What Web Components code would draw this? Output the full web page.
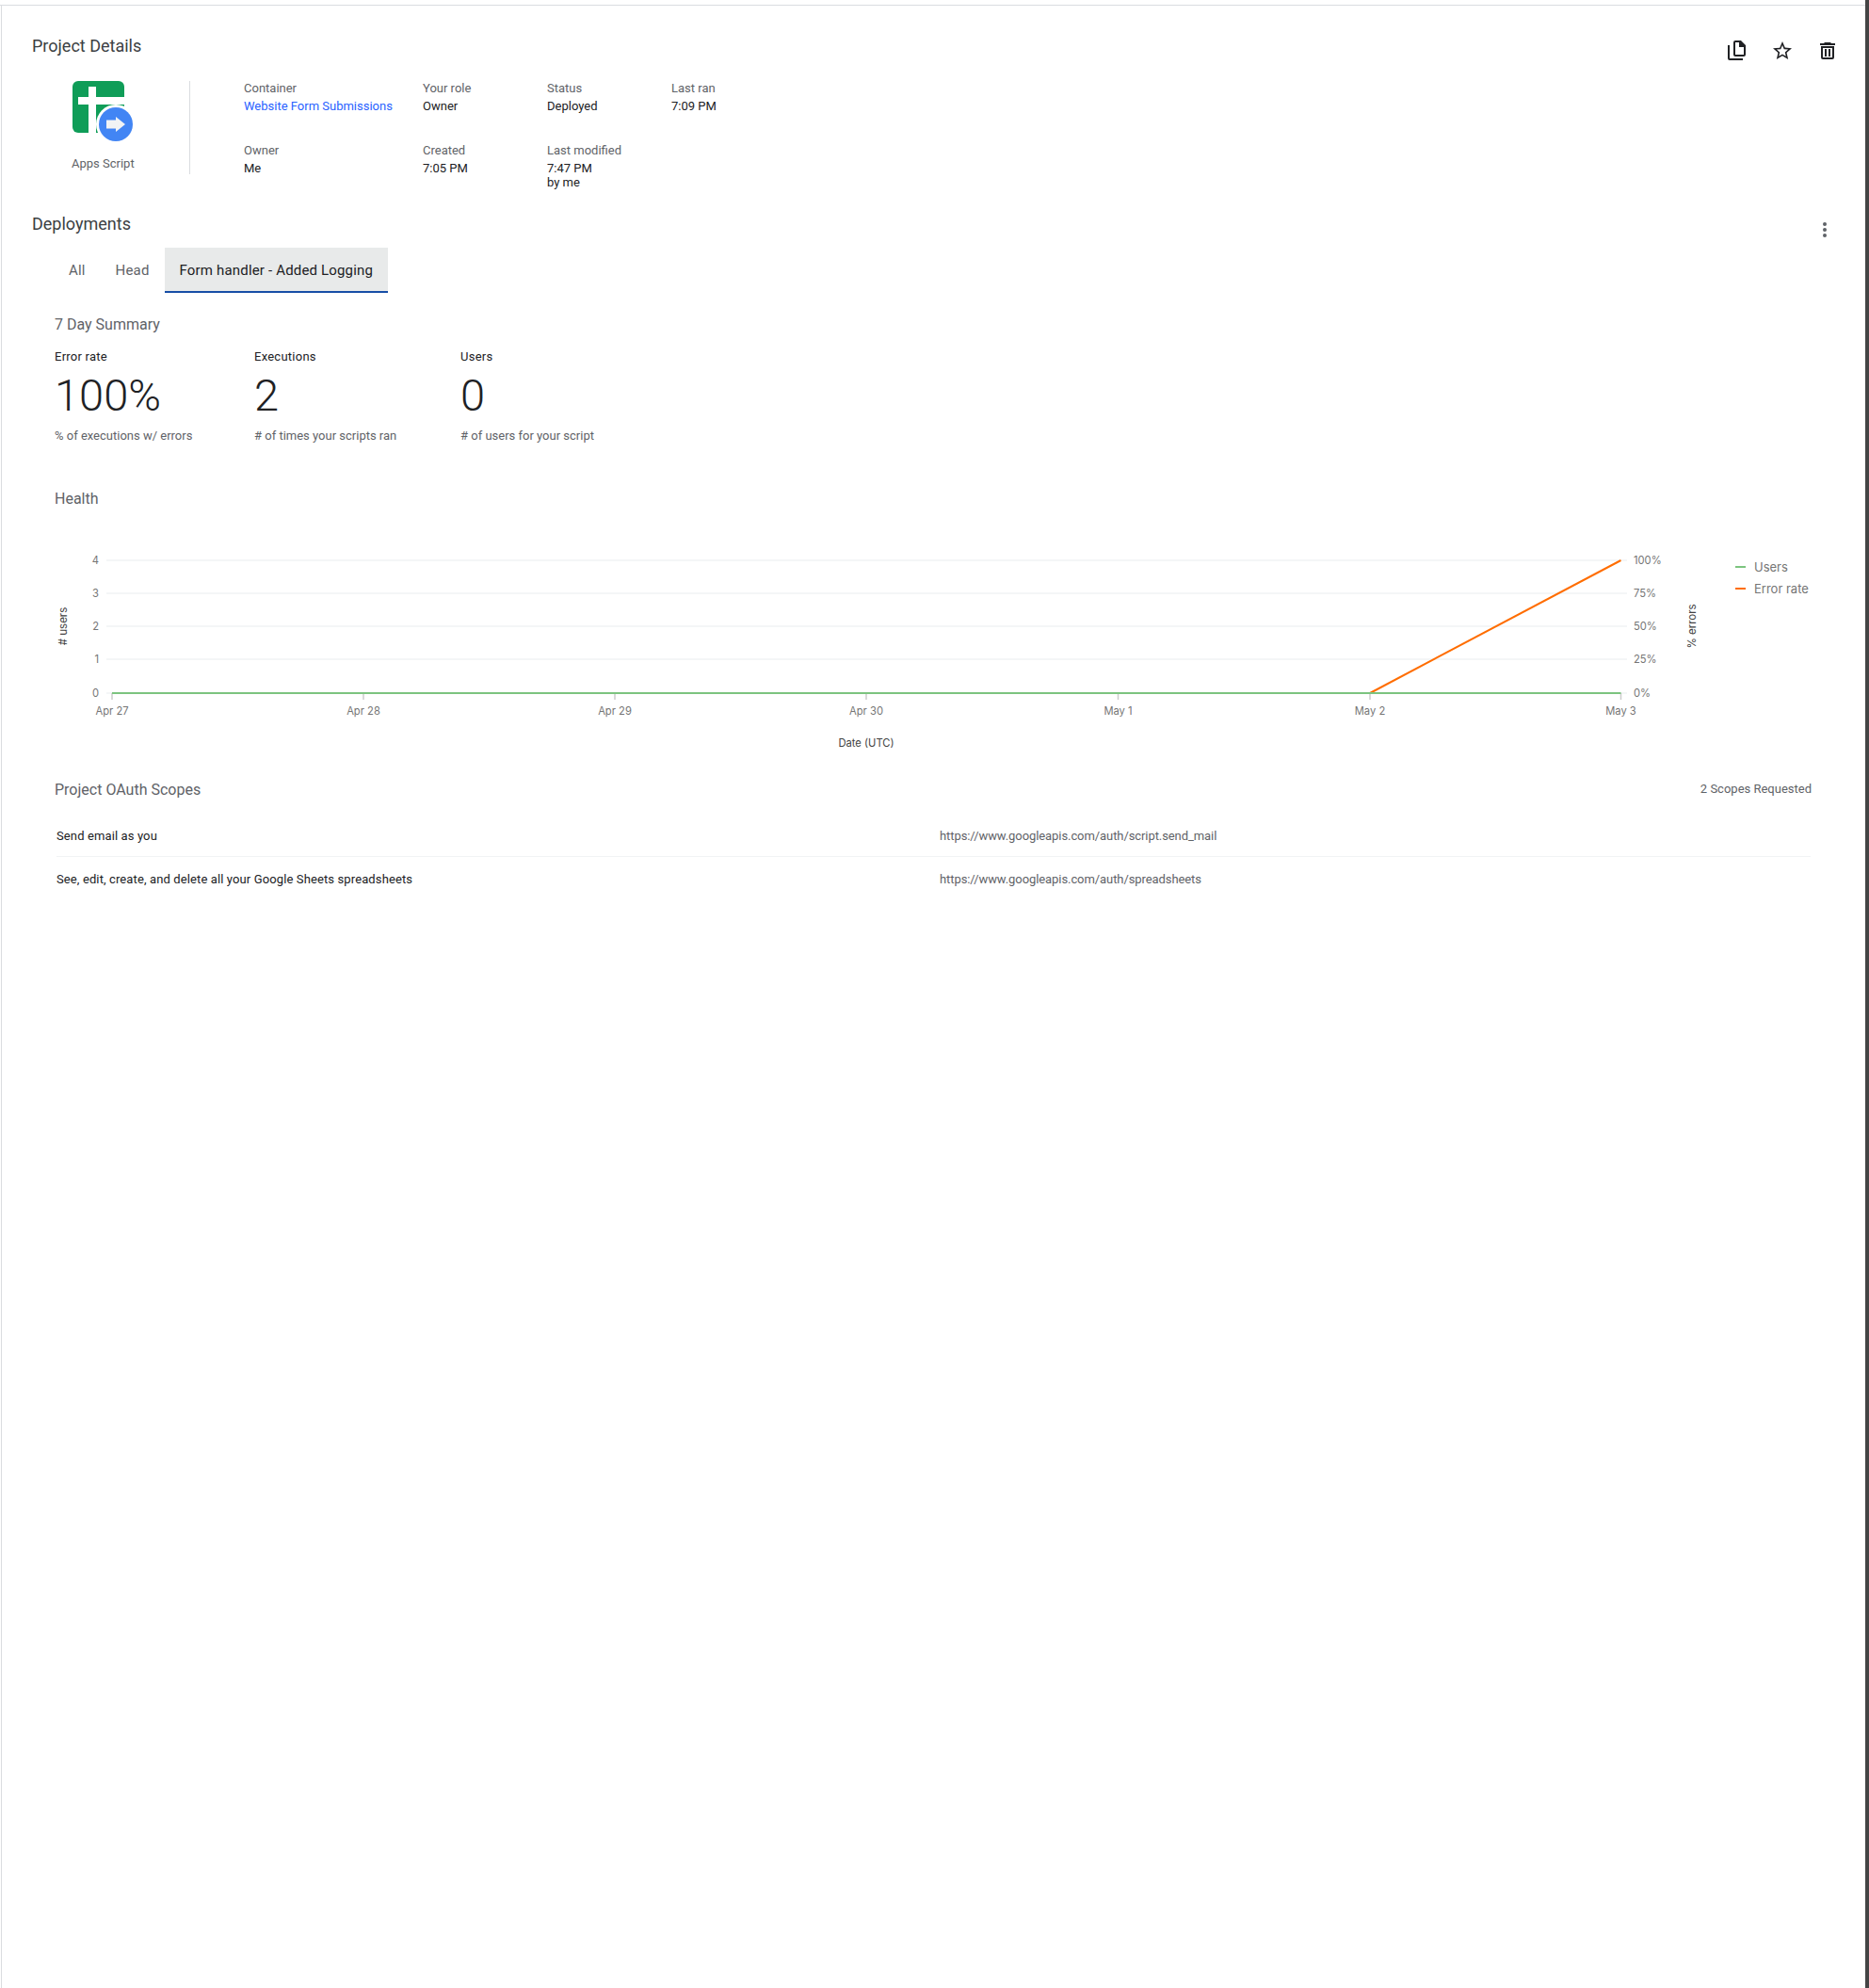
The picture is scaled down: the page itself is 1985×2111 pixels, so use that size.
<!DOCTYPE html>
<html>
<head>
<meta charset="utf-8">
<title>Project Details</title>
<style>
  html, body { margin: 0; padding: 0; background: #fff; }
  body { font-family: Roboto, "Liberation Sans", sans-serif; color: #202124; }
</style>
</head>
<body>
<app-frame>
  <section-title>Project Details</section-title>
  <project-actions></project-actions>
  <project-overview></project-overview>
  <deployment-head></deployment-head>
  <deployment-tabs></deployment-tabs>
  <seven-day-summary></seven-day-summary>
  <health-chart></health-chart>
  <oauth-scopes></oauth-scopes>
</app-frame>

<script>
// Outer frame: the thin grey top and left edges and the dark strip on the right
class AppFrame extends HTMLElement {
  constructor() {
    super();
    this.attachShadow({ mode: 'open' });
    this.shadowRoot.innerHTML = `
      <style>
        :host { display: block; width: 1985px; height: 2111px; box-sizing: border-box; padding-top: 5px; background: #fff; border-right: 4px solid #444; }
        .inner { box-sizing: border-box; height: 2106px; padding-left: 1px; border-top: 1px solid #dadce0; position: relative;
                 background: linear-gradient(#dadce0, #dadce0) 1px 0 / 1px 100% no-repeat; }
      </style>
      <div class="inner"><slot></slot></div>`;
  }
}

class SectionTitle extends HTMLElement {
  constructor() {
    super();
    this.attachShadow({ mode: 'open' });
    this.shadowRoot.innerHTML = `
      <style>
        :host { display: block; box-sizing: border-box; padding: 31px 0 0 33px; height: 80px; font: 400 18px/24px Roboto, sans-serif; color: #3c4043; }
      </style>
      <slot></slot>`;
  }
}

// Copy, star, delete icons sit over the top right of the details block
class ProjectActions extends HTMLElement {
  constructor() {
    super();
    this.attachShadow({ mode: 'open' });
    this.shadowRoot.innerHTML = `
      <style>
        :host { display: flex; position: absolute; top: 36px; right: 28px; gap: 24px; }
        svg { width: 24px; height: 24px; fill: #202124; fill-rule: evenodd; display: block; }
      </style>
      <svg viewBox="0 0 24 24"><path d="M10 1h6l5 5v10a2 2 0 0 1-2 2H10a2 2 0 0 1-2-2V3a2 2 0 0 1 2-2zM10 3v13h9V8h-5V3zM2 6h2v14h14v2H4a2 2 0 0 1-2-2z"/></svg>
      <svg viewBox="0 0 24 24"><path d="M22 9.24l-7.19-.62L12 2 9.19 8.63 2 9.24l5.46 4.73L5.82 21 12 17.27 18.18 21l-1.63-7.03L22 9.24zM12 15.4l-3.76 2.27 1-4.28-3.32-2.88 4.38-.38L12 6.1l1.71 4.04 4.38.38-3.32 2.88 1 4.28L12 15.4z"/></svg>
      <svg viewBox="0 0 24 24"><path d="M9 3h6l1 1h4v2H4V4h4zM5 7h14v12a2 2 0 0 1-2 2H7a2 2 0 0 1-2-2zM7 9v10h10V9zM9 10h2v8H9zM13 10h2v8h-2z"/></svg>`;
  }
}

// One label + value pair in the overview grid
class MetaField extends HTMLElement {
  constructor() {
    super();
    this.attachShadow({ mode: 'open' });
    const link = this.hasAttribute('link');
    this.shadowRoot.innerHTML = `
      <style>
        :host { display: block; font: 400 13px/15px Roboto, sans-serif; }
        .label { color: #5f6368; height: 19px; }
        .value { color: ${link ? '#2962ff' : '#202124'}; }
      </style>
      <div class="label">${this.getAttribute('label')}</div>
      <div class="value"><slot></slot></div>`;
  }
}

class ProjectOverview extends HTMLElement {
  constructor() {
    super();
    this.attachShadow({ mode: 'open' });
    this.shadowRoot.innerHTML = `
      <style>
        :host { display: flex; padding-left: 33px; height: 135px; box-sizing: border-box; font-family: Roboto, sans-serif; }
        .logo { width: 168px; box-sizing: border-box; height: 99px; border-right: 1px solid #dadce0; }
        .logo svg { display: block; margin-left: 43px; width: 64px; height: 66px; }
        .logo span { display: block; margin-top: 14px; padding-left: 42px; font-size: 13px; line-height: 16px; color: #5f6368; }
        .grid { display: grid; grid-template-columns: 190px 132px 132px 100px; grid-template-rows: 66px auto; margin-left: 57px; align-content: start; }
      </style>
      <div class="logo">
        <svg viewBox="0 0 64 66">
          <path d="M6 0h43a6 6 0 0 1 6 6v43a6 6 0 0 1-6 6H6a6 6 0 0 1-6-6V6a6 6 0 0 1 6-6z" fill="#0f9d58"/>
          <path d="M17 6h8v11h30v8H25v30H17V25H6v-8h11z" fill="#fff"/>
          <circle cx="46" cy="46" r="21" fill="#fff"/>
          <circle cx="46" cy="46" r="18" fill="#4285f4"/>
          <path d="M36 41.500h10V38l10 8-10 8v-3.500H36z" fill="#f1f3f4"/>
        </svg>
        <span>Apps Script</span>
      </div>
      <div class="grid">
        <meta-field label="Container" link>Website Form Submissions</meta-field>
        <meta-field label="Your role">Owner</meta-field>
        <meta-field label="Status">Deployed</meta-field>
        <meta-field label="Last ran">7:09 PM</meta-field>
        <meta-field label="Owner">Me</meta-field>
        <meta-field label="Created">7:05 PM</meta-field>
        <meta-field label="Last modified">7:47 PM<br>by me</meta-field>
      </div>`;
  }
}

class DeploymentHead extends HTMLElement {
  constructor() {
    super();
    this.attachShadow({ mode: 'open' });
    this.shadowRoot.innerHTML = `
      <style>
        :host { display: flex; justify-content: space-between; align-items: center; height: 34px; padding: 0 31px 0 33px; font: 400 18px/24px Roboto, sans-serif; color: #3c4043; }
        svg { width: 24px; height: 24px; fill: #5f6368; display: block; align-self: flex-start; margin-top: 11px; }
      </style>
      <span>Deployments</span>
      <svg viewBox="0 0 24 24"><circle cx="12" cy="6" r="2"/><circle cx="12" cy="12" r="2"/><circle cx="12" cy="18" r="2"/></svg>`;
  }
}

class DeploymentTabs extends HTMLElement {
  constructor() {
    super();
    this.attachShadow({ mode: 'open' });
    this.shadowRoot.innerHTML = `
      <style>
        :host { display: flex; padding-left: 56px; height: 48px; margin-top: 8px; font: 400 15px/49px Roboto, sans-serif; color: #5f6368; letter-spacing: .17px; }
        div { padding: 0 16px; box-sizing: border-box; height: 48px; }
        div:first-child { padding: 0 15px 0 17px; }
        .on { background: #e8eaea; color: #202124; border-bottom: 2px solid #174ea6; }
      </style>
      <div>All</div><div>Head</div><div class="on">Form handler - Added Logging</div>`;
  }
}

class SummaryStat extends HTMLElement {
  constructor() {
    super();
    this.attachShadow({ mode: 'open' });
    this.shadowRoot.innerHTML = `
      <style>
        :host { display: block; font-family: Roboto, sans-serif; }
        .t { font: 400 13px/16px Roboto, sans-serif; color: #202124; letter-spacing: .25px; }
        .n { font: 300 47px/56px Roboto, sans-serif; color: #202124; margin-top: 5px; }
        .d { font: 400 13px/16px Roboto, sans-serif; color: #5f6368; margin-top: 7px; }
      </style>
      <div class="t">${this.getAttribute('title')}</div>
      <div class="n">${this.getAttribute('value')}</div>
      <div class="d">${this.getAttribute('note')}</div>`;
  }
}

class SevenDaySummary extends HTMLElement {
  constructor() {
    super();
    this.attachShadow({ mode: 'open' });
    this.shadowRoot.innerHTML = `
      <style>
        :host { display: block; padding: 22px 0 0 57px; height: 207px; box-sizing: border-box; }
        h3 { margin: 0 0 14px; font: 400 16px/24px Roboto, sans-serif; color: #5f6368; }
        .row { display: grid; grid-template-columns: 212px 219px 300px; }
      </style>
      <h3>7 Day Summary</h3>
      <div class="row">
        <summary-stat title="Error rate" value="100%" note="% of executions w/ errors"></summary-stat>
        <summary-stat title="Executions" value="2" note="# of times your scripts ran"></summary-stat>
        <summary-stat title="Users" value="0" note="# of users for your script"></summary-stat>
      </div>`;
  }
}

// The chart is a drawing, so its parts are placed by plot coordinates in the svg
class HealthChart extends HTMLElement {
  constructor() {
    super();
    this.attachShadow({ mode: 'open' });
    const gridY = [595, 630, 665, 700, 736];
    const tickX = [119, 386, 653, 920, 1187.5, 1455, 1721.5];
    const days = ['Apr 27', 'Apr 28', 'Apr 29', 'Apr 30', 'May 1', 'May 2', 'May 3'];
    const left = ['4', '3', '2', '1', '0'];
    const right = ['100%', '75%', '50%', '25%', '0%'];
    let s = '';
    gridY.forEach((y, i) => {
      s += `<line x1="113" x2="1728" y1="${y}" y2="${y}" stroke="#f1f3f4" stroke-width="1.5"/>`;
      s += `<text x="105" y="${y + 4}" text-anchor="end" class="tick">${left[i]}</text>`;
      s += `<text x="1735" y="${y + 4}" class="tick">${right[i]}</text>`;
    });
    tickX.forEach((x, i) => {
      s += `<line x1="${x}" x2="${x}" y1="736" y2="743" stroke="#ccc" stroke-width="1.5"/>`;
      s += `<text x="${x}" y="759" text-anchor="middle" class="tick">${days[i]}</text>`;
    });
    this.shadowRoot.innerHTML = `
      <style>
        :host { display: block; }
        h3 { margin: 0 0 28px 57px; font: 400 16px/24px Roboto, sans-serif; color: #5f6368; }
        svg { display: block; width: 1980px; height: 240px; }
        text { font-family: Inter, Roboto, sans-serif; font-size: 11.2px; }
        .tick { fill: #757575; }
        .axis { fill: #424242; font-size: 11.5px; }
        .legend { fill: #757575; font-size: 13px; }
      </style>
      <h3>Health</h3>
      <svg viewBox="1 570 1980 240">
        ${s}
        <line x1="1455" y1="736" x2="1721.5" y2="595" stroke="#ff6d00" stroke-width="2"/>
        <line x1="119" y1="736" x2="1721.5" y2="736" stroke="#7cc47f" stroke-width="2"/>
        <text x="0" y="0" class="axis" text-anchor="middle" transform="translate(71 665) rotate(-90)"># users</text>
        <text x="0" y="0" class="axis" text-anchor="middle" transform="translate(1801 665) rotate(-90)">% errors</text>
        <text x="920" y="793" class="axis" style="font-size:11.2px" text-anchor="middle">Date (UTC)</text>
        <line x1="1843" x2="1854" y1="602" y2="602" stroke="#7cc47f" stroke-width="2"/>
        <text x="1863" y="606.5" class="legend">Users</text>
        <line x1="1843" x2="1854" y1="625" y2="625" stroke="#ff6d00" stroke-width="2"/>
        <text x="1863" y="629.5" class="legend">Error rate</text>
      </svg>`;
  }
}

class ScopeRow extends HTMLElement {
  constructor() {
    super();
    this.attachShadow({ mode: 'open' });
    this.shadowRoot.innerHTML = `
      <style>
        :host { display: grid; grid-template-columns: 938px 1fr; height: 46px; padding-top: 3px; align-items: center; font: 400 13px/16px Roboto, sans-serif; letter-spacing: .12px; color: #202124; border-bottom: 1px solid #f1f3f4; box-sizing: border-box; }
        :host(:last-child) { border-bottom: 0; padding-top: 2px; }
        .url { color: #5f6368; letter-spacing: -.08px; }
      </style>
      <div><slot></slot></div>
      <div class="url">${this.getAttribute('url')}</div>`;
  }
}

class OauthScopes extends HTMLElement {
  constructor() {
    super();
    this.attachShadow({ mode: 'open' });
    this.shadowRoot.innerHTML = `
      <style>
        :host { display: block; padding: 17px 57px 0 57px; }
        .head { display: flex; justify-content: space-between; align-items: center; height: 24px; margin-bottom: 13px; }
        h3 { margin: 0; font: 400 16px/24px Roboto, sans-serif; color: #5f6368; }
        .count { font: 400 13px/16px Roboto, sans-serif; color: #5f6368; margin-top: -2px; }
        .rows { padding-left: 2px; margin-right: 1px; }
      </style>
      <div class="head"><h3>Project OAuth Scopes</h3><span class="count">2 Scopes Requested</span></div>
      <div class="rows">
        <scope-row url="https://www.googleapis.com/auth/script.send_mail">Send email as you</scope-row>
        <scope-row url="https://www.googleapis.com/auth/spreadsheets">See, edit, create, and delete all your Google Sheets spreadsheets</scope-row>
      </div>`;
  }
}

customElements.define('app-frame', AppFrame);
customElements.define('section-title', SectionTitle);
customElements.define('project-actions', ProjectActions);
customElements.define('meta-field', MetaField);
customElements.define('project-overview', ProjectOverview);
customElements.define('deployment-head', DeploymentHead);
customElements.define('deployment-tabs', DeploymentTabs);
customElements.define('summary-stat', SummaryStat);
customElements.define('seven-day-summary', SevenDaySummary);
customElements.define('health-chart', HealthChart);
customElements.define('scope-row', ScopeRow);
customElements.define('oauth-scopes', OauthScopes);
</script>
</body>
</html>
